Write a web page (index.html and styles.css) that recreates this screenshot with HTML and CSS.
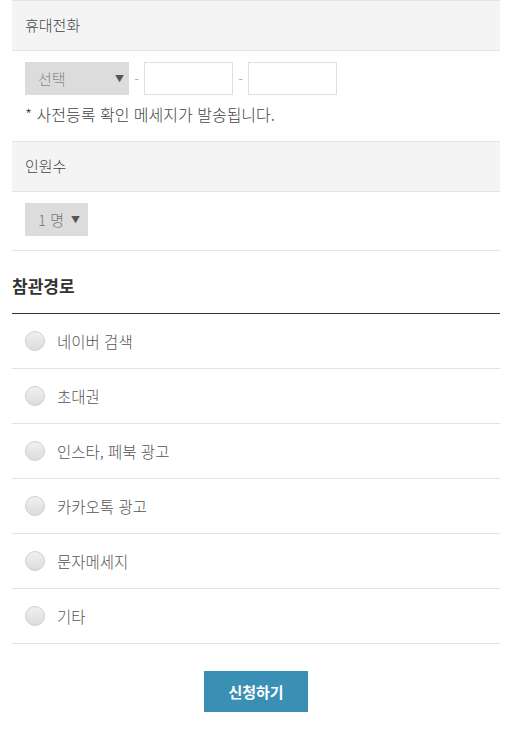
FILE: index.html
```html
<!DOCTYPE html>
<html lang="ko">
<head>
<meta charset="utf-8">
<link rel="stylesheet" href="styles.css">
</head>
<body>
<div class="wrap">
  <div class="head">휴대전화</div>
  <div class="body phone">
    <div class="row">
      <div class="sel sel-wide"><span>선택</span><span class="arr">▼</span></div>
      <span class="dash">-</span>
      <div class="inp"></div>
      <span class="dash">-</span>
      <div class="inp"></div>
    </div>
    <p class="note">* 사전등록 확인 메세지가 발송됩니다.</p>
  </div>
  <div class="head">인원수</div>
  <div class="body people">
    <div class="sel sel-small"><span>1 명</span><span class="arr">▼</span></div>
  </div>
  <h2 class="title">참관경로</h2>
  <ul class="list">
    <li><span class="radio"></span>네이버 검색</li>
    <li><span class="radio"></span>초대권</li>
    <li><span class="radio"></span>인스타, 페북 광고</li>
    <li><span class="radio"></span>카카오톡 광고</li>
    <li><span class="radio"></span>문자메세지</li>
    <li><span class="radio"></span>기타</li>
  </ul>
  <div class="actions"><button class="btn">신청하기</button></div>
</div>
</body>
</html>
```
FILE: styles.css
```css
html, body { margin: 0; padding: 0; background: #fff; }
body { font-family: "Noto Sans CJK KR", "Noto Sans", sans-serif; color: #555; font-size: 15px; font-weight: 300; }
.wrap { margin: 0 12px; }
.head {
  background: #f4f4f4;
  border-top: 1px solid #e4e4e4;
  border-bottom: 1px solid #e4e4e4;
  height: 49px;
  line-height: 48px;
  padding-left: 13px;
  color: #444;
}
.body { padding-left: 13px; }
.phone { padding-top: 11px; padding-bottom: 16px; }
.row { display: flex; align-items: center; }
.sel {
  background: #dcdcdc;
  height: 33px;
  display: flex;
  align-items: center;
  color: #888;
  box-sizing: border-box;
}
.sel-wide { width: 104px; padding: 0 5px 0 13px; justify-content: space-between; }
.sel-small { width: 63px; padding: 0 0 0 13px; gap: 7px; color: #777; }
.arr { font-size: 9px; color: #555; }
.dash { width: 15px; text-align: center; color: #999; font-size: 14px; }
.inp { width: 87px; height: 31px; border: 1px solid #dedede; background: #fff; }
.note { margin: 8px 0 0; font-size: 16px; color: #444; line-height: 22px; }
.people { padding-top: 11px; padding-bottom: 14px; border-bottom: 1px solid #e4e4e4; }
.title {
  margin: 0;
  font-size: 17px;
  font-weight: 700;
  color: #333;
  padding-top: 22px;
  height: 40px;
  line-height: 26px;
  border-bottom: 1px solid #2f3545;
}
.list { list-style: none; margin: 0; padding: 0; }
.list li {
  height: 54px;
  border-bottom: 1px solid #e2e2e2;
  display: flex;
  align-items: center;
  padding-left: 13px;
  color: #555;
  font-size: 15.5px;
}
.radio {
  width: 18px; height: 18px;
  border-radius: 50%;
  border: 1px solid #cfcfcf;
  background: linear-gradient(#f0f0f0, #dcdcdc);
  margin-right: 12px;
  flex: none;
}
.actions { display: flex; justify-content: center; padding-top: 27px; }
.btn {
  width: 104px; height: 41px;
  background: #3a8fb5;
  color: #fff;
  border: 0;
  font-family: inherit;
  font-size: 15px;
  font-weight: 700;
}
```
